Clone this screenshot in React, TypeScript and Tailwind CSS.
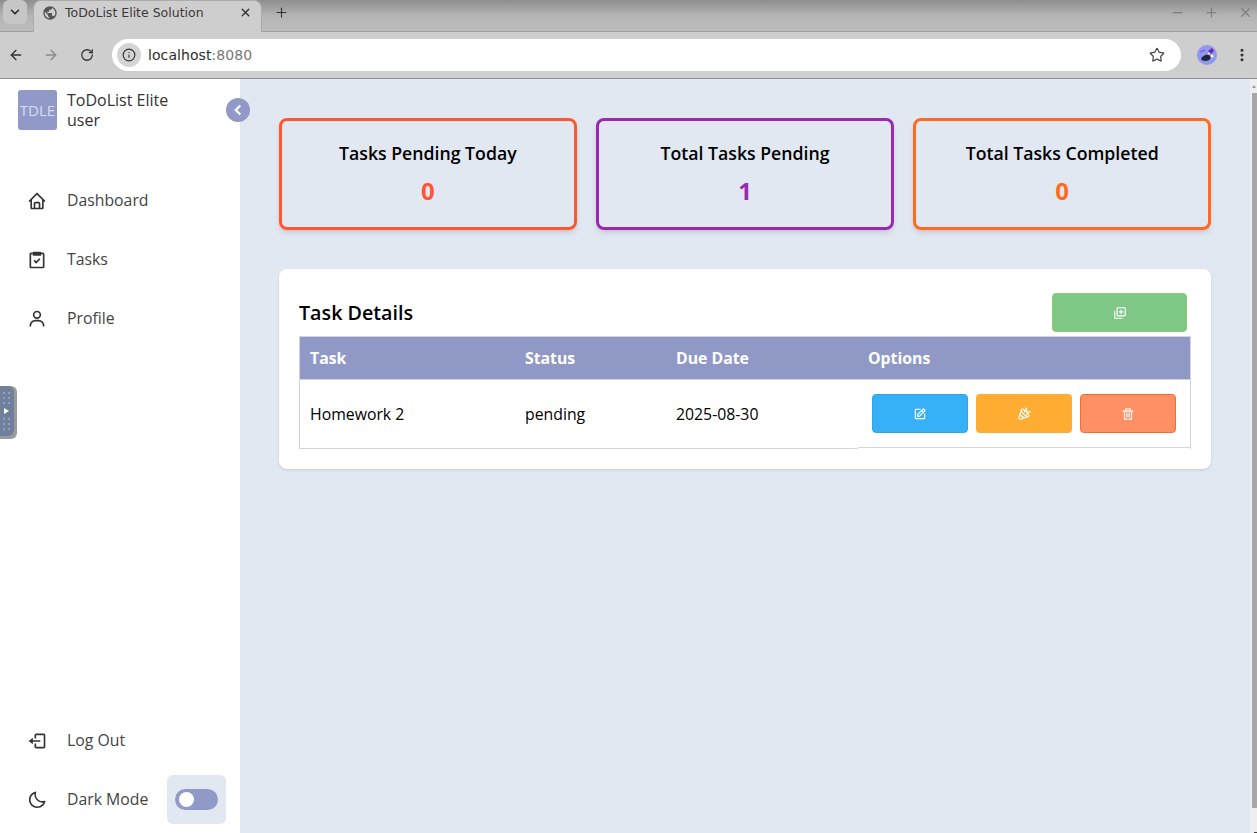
import { ArrowLeft, ArrowRight, Ellipsis, Info, Minus, Plus, RotateCw, Star, X, ChevronDown } from "lucide-react";
import {
  BiAddToQueue,
  BiEdit,
  BiHome,
  BiLogOut,
  BiMoon,
  BiParty,
  BiSolidChevronLeft,
  BiTask,
  BiTrash,
  BiUser,
} from "react-icons/bi";
import { MdPublic } from "react-icons/md";

const navItems = [
  { label: "Dashboard", Icon: BiHome },
  { label: "Tasks", Icon: BiTask },
  { label: "Profile", Icon: BiUser },
];

const stats = [
  { title: "Tasks Pending Today", value: "0", box: "border-[#ff5630]", text: "text-[#ff5630]" },
  { title: "Total Tasks Pending", value: "1", box: "border-[#9c27b0]", text: "text-[#9c27b0]" },
  { title: "Total Tasks Completed", value: "0", box: "border-[#ff6a1f]", text: "text-[#ff6a1f]" },
];

function GripDots() {
  return (
    <div className="grid grid-cols-2 gap-x-[3px] gap-y-[3px]">
      {[0, 1, 2, 3, 4, 5].map((n) => (
        <span key={n} className="w-[2px] h-[2px] bg-[#93a1b8]" />
      ))}
    </div>
  );
}

function BrowserBar() {
  return (
    <header className="shrink-0 font-['DejaVu_Sans',sans-serif]">
      {/* Tab strip */}
      <div className="h-8 flex items-start bg-gradient-to-b from-[#8e8e8e] via-[#b4b4b4] to-[#bdbdbd] border-b border-[#9f9f9f]">
        <div className="ml-[3px] mt-0 w-6 h-6 rounded-md bg-[#c6c6c6] flex items-center justify-center text-[#222]">
          <ChevronDown size={14} strokeWidth={2.5} />
        </div>
        <div className="ml-[6px] w-[229px] h-8 rounded-t-lg bg-[#cecece] border-x border-t border-[#ababab] flex items-start pt-[4px] pl-2 pr-[9px] text-[#3a3a3a]">
          <MdPublic size={16} className="text-[#555]" />
          <span className="ml-[7px] text-[12.5px] leading-4">ToDoList Elite Solution</span>
          <X size={13} strokeWidth={2.5} className="ml-auto mt-[1px] text-[#333]" />
        </div>
        <Plus size={15} strokeWidth={1.8} className="ml-3 mt-[5px] text-[#333]" />
        <div className="ml-auto mt-[5px] flex items-center gap-[19px] pr-[4px] text-[#7f7f7f]">
          <Minus size={15} strokeWidth={2} />
          <Plus size={15} strokeWidth={2} />
          <X size={15} strokeWidth={2} />
        </div>
      </div>
      {/* Toolbar */}
      <div className="h-[47px] flex items-center bg-[#cecece] border-b border-[#8f8f8f]">
        <ArrowLeft size={16} strokeWidth={2} className="ml-2 text-[#333]" />
        <ArrowRight size={16} strokeWidth={2} className="ml-[19px] text-[#8a8a8a]" />
        <RotateCw size={14} strokeWidth={2.2} className="ml-[21px] text-[#333]" />
        <div className="ml-[18px] w-[1069px] h-8 rounded-full bg-white flex items-center pl-[5px] pr-[16px]">
          <div className="w-[24px] h-[24px] rounded-full bg-[#d4d4d4] flex items-center justify-center text-[#333]">
            <Info size={14} strokeWidth={2} />
          </div>
          <span className="ml-[7px] text-sm tracking-[0.08px] text-[#2c2c2c]">
            localhost<span className="text-[#777]">:8080</span>
          </span>
          <Star size={16} strokeWidth={1.8} className="ml-auto text-[#444]" />
        </div>
        <svg viewBox="0 0 20 20" className="ml-4 w-5 h-5">
          <circle cx="10" cy="10" r="10" fill="#8e98f0" />
          <path d="M4 14c1-3 5-5 8-4l2 2c-1 3-3 4-6 4-2 0-3-1-4-2z" fill="#24243a" />
          <path d="M11 6l4-3 2 3-3 3z" fill="#6a2ca8" />
          <path d="M3 7l5-2" stroke="#9a3fb8" strokeWidth="1" />
          <circle cx="15" cy="11" r="1.5" fill="#ffffff" />
          <circle cx="12" cy="8.5" r="1" fill="#ffffff" />
        </svg>
        <Ellipsis size={16} strokeWidth={2.6} className="ml-[17px] rotate-90 text-[#333]" />
      </div>
    </header>
  );
}

function Sidebar() {
  return (
    <aside className="relative w-[240px] shrink-0 bg-white flex flex-col text-[#444]">
      <div className="pl-[18px] pt-[11px] flex">
        <div className="w-[39px] h-10 rounded-[3px] bg-[#9099c8] flex items-center justify-center text-[#d9dcef] text-[15px] font-medium">
          TDLE
        </div>
        <div className="ml-[10px] text-[#333] text-base leading-5">
          <div>ToDoList Elite</div>
          <div>user</div>
        </div>
      </div>

      <button className="absolute left-[226px] top-[19px] w-6 h-6 rounded-full bg-[#9099c8] flex items-center justify-center text-white">
        <BiSolidChevronLeft size={18} />
      </button>

      <nav className="mt-[41px] flex flex-col">
        {navItems.map(({ label, Icon }) => (
          <a key={label} className="h-[59px] flex items-center pl-[27px] text-[15.8px]">
            <Icon size={20} className="text-[#333]" />
            <span className="ml-[20px]">{label}</span>
          </a>
        ))}
      </nav>

      {/* devtools handle floating over the page */}
      <div className="absolute left-0 top-[307px] w-[17px] h-[53px] rounded-r-md bg-[#9a9a9a]">
        <div className="w-[14px] h-[50px] rounded-r-md bg-[#6f7f9c] flex flex-col items-center justify-center gap-[4px] pr-[2px]">
          <GripDots />
          <div className="w-0 h-0 border-y-[3px] border-y-transparent border-l-[5px] border-l-white" />
          <GripDots />
        </div>
      </div>

      <div className="mt-auto flex flex-col pb-[9px]">
        <a className="h-[59px] flex items-center pl-[27px] text-[15.8px]">
          <BiLogOut size={20} className="text-[#333]" />
          <span className="ml-[20px]">Log Out</span>
        </a>
        <div className="h-[49px] mt-[5px] flex items-center pl-[27px] text-[15.8px]">
          <BiMoon size={20} className="text-[#333]" />
          <span className="ml-[20px]">Dark Mode</span>
          <div className="ml-auto mr-[14px] w-[59px] h-[49px] rounded-md bg-[#e1e8f2] flex items-center justify-center">
            <div className="w-[43px] h-[21px] rounded-full bg-[#9099c8] flex items-center pl-[4px]">
              <div className="w-[15px] h-[15px] rounded-full bg-white" />
            </div>
          </div>
        </div>
      </div>
    </aside>
  );
}

function TaskTable() {
  return (
    <div className="mx-5 border border-[#d0d5e0] border-b-0 text-[15.8px]">
      <div className="h-[43px] pt-[1px] flex items-center bg-[#9099c6] text-white font-bold border-b border-[#d0d5e0]">
        <div className="w-[215px] pl-[10px]">Task</div>
        <div className="w-[151px] pl-[10px]">Status</div>
        <div className="w-[192px] pl-[10px]">Due Date</div>
        <div className="pl-[10px]">Options</div>
      </div>
      <div className="flex items-start text-black h-[69px]">
        <div className="w-[558px] h-[69px] pt-[1px] flex items-center border-b border-[#d0d5e0]">
          <div className="w-[215px] pl-[10px]">Homework 2</div>
          <div className="w-[151px] pl-[10px]">pending</div>
          <div className="w-[192px] pl-[10px]">2025-08-30</div>
        </div>
        <div className="flex-1 h-[68px] flex items-start gap-2 pt-[14px] pl-[14px] border-b border-[#d0d5e0]">
          <button className="w-24 h-[39px] rounded bg-[#36b0f6] border border-[#2aa5ee] flex items-center justify-center text-white">
            <BiEdit size={14} />
          </button>
          <button className="w-24 h-[39px] rounded bg-[#ffac33] flex items-center justify-center text-white">
            <BiParty size={14} />
          </button>
          <button className="w-24 h-[39px] rounded bg-[#ff9066] border border-[#ff6a2b] flex items-center justify-center text-white">
            <BiTrash size={14} />
          </button>
        </div>
      </div>
    </div>
  );
}

export default function App() {
  return (
    <div className="h-[833px] flex flex-col overflow-hidden font-['Open_Sans',sans-serif]">
      <BrowserBar />
      <div className="flex-1 flex min-h-0">
        <Sidebar />
        <main className="flex-1 bg-[#e1e8f2] pt-[39px] px-[39px]">
          <div className="grid grid-cols-3 gap-[19.5px]">
            {stats.map((s) => (
              <div
                key={s.title}
                className={`h-[112px] rounded-lg border-[3px] ${s.box} shadow-md flex flex-col items-center pt-[18px]`}
              >
                <h3 className="text-[17.7px] leading-7 font-semibold text-black">{s.title}</h3>
                <p className={`mt-[8px] text-2xl leading-8 font-bold ${s.text}`}>{s.value}</p>
              </div>
            ))}
          </div>

          <section className="mt-[39px] h-[200px] rounded-lg bg-white shadow-sm pt-[24px]">
            <div className="flex items-start pl-5 pr-6 h-[43px]">
              <h2 className="mt-[6px] text-[19.7px] leading-7 font-semibold text-black">Task Details</h2>
              <button className="ml-auto w-[135px] h-[39px] rounded bg-[#7fc787] border border-[#8ccb6e] flex items-center justify-center text-white">
                <BiAddToQueue size={14} />
              </button>
            </div>
            <TaskTable />
          </section>
        </main>
        {/* page scrollbar */}
        <div className="w-[7px] shrink-0 bg-[#eeeeee] flex flex-col items-end pt-[6px]">
          <div className="w-0 h-0 mr-[1px] border-x-[2px] border-x-transparent border-b-[3px] border-b-[#9a9a9a]" />
          <div className="mt-[5px] w-[5px] h-[715px] bg-[#a8a8a8]" />
          <div className="mt-auto w-[3px] h-px bg-[#444]" />
        </div>
      </div>
    </div>
  );
}
